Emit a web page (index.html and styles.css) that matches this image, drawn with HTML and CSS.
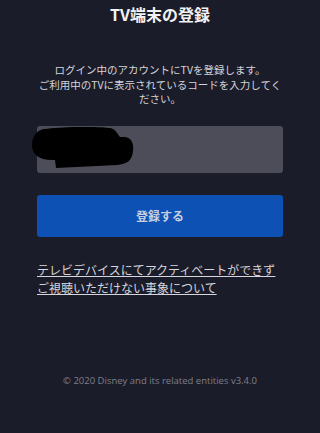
FILE: index.html
```html
<!DOCTYPE html>
<html lang="ja">
<head>
    <meta charset="UTF-8">
    <meta name="viewport" content="width=device-width, initial-scale=1.0">
    <title>TV端末の登録</title>
    <link rel="stylesheet" href="styles.css">
</head>
<body>
    <div class="page">
        <h1 class="title">TV端末の登録</h1>
        <p class="lead">ログイン中のアカウントにTVを登録します。<br>ご利用中のTVに表示されているコードを入力してください。</p>
        <div class="code-field">
            <input type="text" id="code" class="code-input" aria-label="code">
            <svg class="redact" width="102" height="42" viewBox="0 0 102 42">
                <path d="M12,2 C30,0 60,-1 78,1 C84,2 86,8 88,10 L92,10 C100,10 102,18 101,24 C100,34 95,37 85,38 L24,41 L23,33 C8,34 0,28 0,18 C0,8 6,3 12,2 Z" fill="#000"/>
            </svg>
        </div>
        <button class="submit">登録する</button>
        <a href="#" class="help-link">テレビデバイスにてアクティベートができずご視聴いただけない事象について</a>
        <p class="footer">© 2020 Disney and its related entities v3.4.0</p>
    </div>
</body>
</html>
```

FILE: styles.css
```css
body {
    margin: 0;
    background-color: #1b1c2a;
    font-family: "Noto Sans CJK JP", "Noto Sans", sans-serif;
    color: #e6e6ea;
}

.page {
    padding: 0 37px;
    display: flex;
    flex-direction: column;
}

.title {
    margin: 2px 0 0;
    font-size: 16px;
    line-height: 24px;
    font-weight: bold;
    text-align: center;
    color: #f2f2f4;
}

.lead {
    margin: 37px 0 0;
    font-size: 10.5px;
    line-height: 14.5px;
    text-align: center;
    color: #d4d4d9;
}

.code-field {
    position: relative;
    margin-top: 19px;
}

.code-input {
    display: block;
    box-sizing: border-box;
    width: 100%;
    height: 47px;
    border: none;
    border-radius: 3px;
    background-color: #4c4d58;
}

.redact {
    position: absolute;
    left: -5px;
    top: 1px;
}

.submit {
    margin-top: 22px;
    height: 42px;
    border: none;
    border-radius: 3px;
    background-color: #0c51b3;
    color: #c8cfe0;
    font-family: inherit;
    font-size: 12px;
    font-weight: bold;
}

.help-link {
    margin-top: 24px;
    font-size: 12px;
    line-height: 18px;
    color: #d6d6dc;
    text-decoration: underline;
}

.footer {
    margin: 77px 0 0;
    font-family: "Open Sans", sans-serif;
    font-size: 9.5px;
    text-align: center;
    color: #7e7f89;
}
```
